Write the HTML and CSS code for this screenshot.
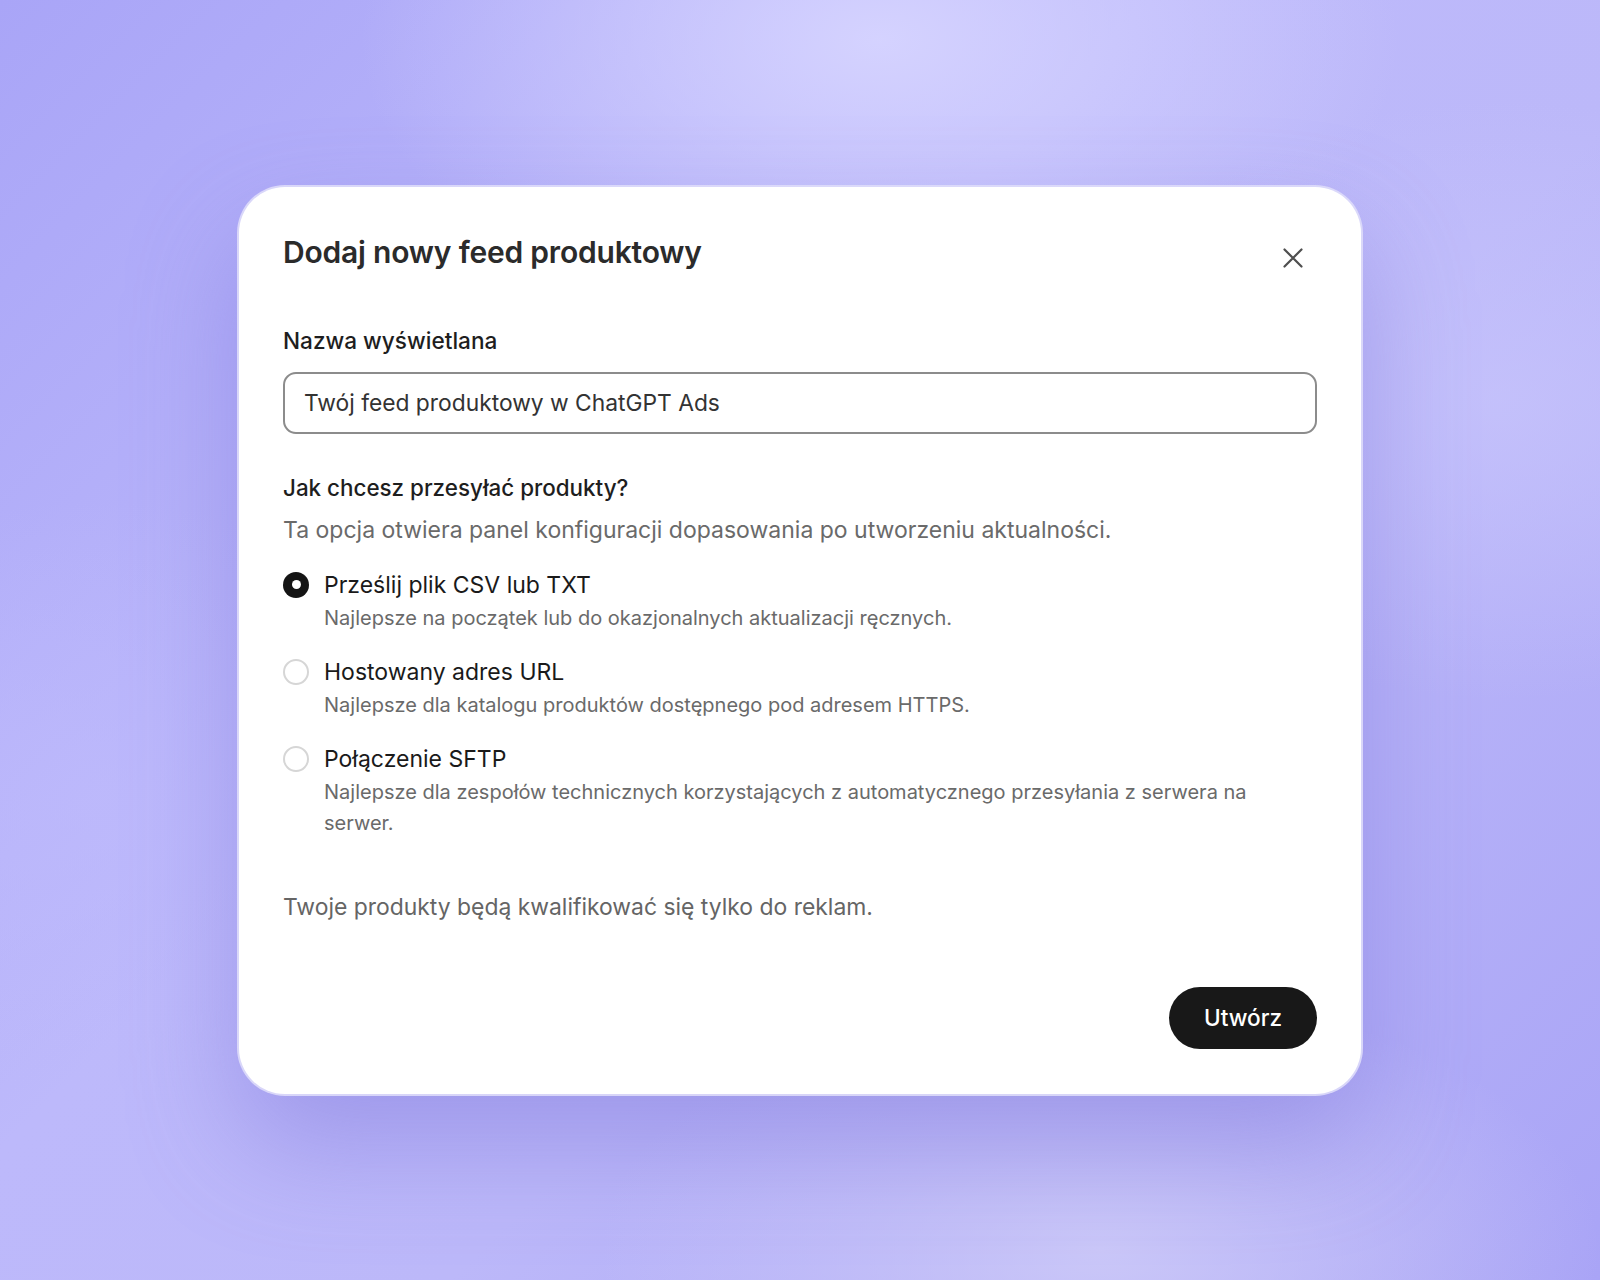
FILE: index.html
```html
<!DOCTYPE html>
<html lang="pl">
<head>
<meta charset="utf-8">
<title>Dodaj nowy feed produktowy</title>
<link rel="stylesheet" href="styles.css">
</head>
<body>
<div class="stage">
  <div class="modal">
    <div class="modal-header">
      <h1 class="modal-title">Dodaj nowy feed produktowy</h1>
      <button class="close-btn" aria-label="Zamknij">
        <svg width="24" height="24" viewBox="0 0 24 24"><path d="M3.5 3.5 L20.5 20.5 M20.5 3.5 L3.5 20.5" stroke="#4f4f4f" stroke-width="2.2" stroke-linecap="round" fill="none"/></svg>
      </button>
    </div>

    <label class="field-label">Nazwa wyświetlana</label>
    <div class="text-input">Twój feed produktowy w ChatGPT Ads</div>

    <div class="section-title">Jak chcesz przesyłać produkty?</div>
    <div class="section-sub">Ta opcja otwiera panel konfiguracji dopasowania po utworzeniu aktualności.</div>

    <div class="options">
      <div class="option">
        <span class="radio checked"></span>
        <div class="option-body">
          <div class="option-title">Prześlij plik CSV lub TXT</div>
          <div class="option-desc">Najlepsze na początek lub do okazjonalnych aktualizacji ręcznych.</div>
        </div>
      </div>
      <div class="option">
        <span class="radio"></span>
        <div class="option-body">
          <div class="option-title">Hostowany adres URL</div>
          <div class="option-desc">Najlepsze dla katalogu produktów dostępnego pod adresem HTTPS.</div>
        </div>
      </div>
      <div class="option">
        <span class="radio"></span>
        <div class="option-body">
          <div class="option-title">Połączenie SFTP</div>
          <div class="option-desc narrow">Najlepsze dla zespołów technicznych korzystających z automatycznego przesyłania z serwera na serwer.</div>
        </div>
      </div>
    </div>

    <div class="note">Twoje produkty będą kwalifikować się tylko do reklam.</div>

    <div class="actions">
      <button class="primary-btn">Utwórz</button>
    </div>
  </div>
</div>
</body>
</html>
```

FILE: styles.css
```css
* { box-sizing: border-box; }
html, body { margin: 0; padding: 0; }
body {
  width: 1600px;
  height: 1280px;
  overflow: hidden;
  font-family: Inter, "Noto Sans", "Liberation Sans", sans-serif;
  background:
    radial-gradient(ellipse 520px 300px at 880px 40px, rgba(214,212,255,0.95), rgba(214,212,255,0) 100%),
    radial-gradient(ellipse 500px 260px at 1100px 1250px, rgba(205,202,248,0.9), rgba(205,202,248,0) 100%),
    radial-gradient(ellipse 420px 300px at 1500px 400px, rgba(200,197,252,0.7), rgba(200,197,252,0) 100%),
    radial-gradient(ellipse 400px 300px at 100px 800px, rgba(190,186,252,0.7), rgba(190,186,252,0) 100%),
    linear-gradient(135deg, #a9a5f7 0%, #bdb9fb 40%, #bcb8f9 60%, #a9a4f6 100%);
}
.stage {
  width: 1600px;
  height: 1280px;
  display: flex;
  align-items: center;
  justify-content: center;
}
.modal {
  width: 1122px;
  background: #ffffff;
  border-radius: 46px;
  padding: 45px 44px 45px 44px;
  box-shadow:
    0 0 0 2px rgba(222, 220, 250, 0.9),
    0 50px 110px rgba(120, 110, 215, 0.45);
  display: flex;
  flex-direction: column;
  color: #1c1c1c;
}
.modal-header {
  display: flex;
  justify-content: space-between;
  align-items: flex-start;
}
.modal-title {
  margin: 0;
  font-size: 30px;
  line-height: 40px;
  font-weight: 600;
  color: #2b2b2b;
  letter-spacing: -0.2px;
}
.close-btn {
  margin-top: 14px;
  margin-right: 12px;
  width: 24px;
  height: 24px;
  padding: 0;
  border: 0;
  background: none;
  display: flex;
}
.field-label {
  margin-top: 53px;
  font-size: 22.6px;
  line-height: 32px;
  font-weight: 500;
  color: #1e1e1e;
}
.text-input {
  margin-top: 15px;
  height: 62px;
  border: 2px solid #8c8c8c;
  border-radius: 13px;
  padding: 0 19px;
  display: flex;
  align-items: center;
  font-size: 22.8px;
  color: #333;
}
.section-title {
  margin-top: 38px;
  font-size: 22.4px;
  line-height: 32px;
  font-weight: 500;
  color: #1e1e1e;
}
.section-sub {
  margin-top: 10px;
  font-size: 23px;
  line-height: 32px;
  color: #6a6a6a;
}
.options {
  margin-top: 23px;
  display: flex;
  flex-direction: column;
  gap: 22px;
}
.option {
  display: flex;
  align-items: flex-start;
  gap: 15px;
}
.radio {
  flex: none;
  width: 26px;
  height: 26px;
  margin-top: 3px;
  border-radius: 50%;
  border: 2px solid #d6d6d6;
  background: #fff;
  position: relative;
}
.radio.checked {
  border: 0;
  background: #141414;
}
.radio.checked::after {
  content: "";
  position: absolute;
  left: 50%;
  top: 50%;
  width: 9px;
  height: 9px;
  margin: -4.5px 0 0 -4.5px;
  background: #fff;
  border-radius: 50%;
}
.option-title {
  font-size: 23px;
  line-height: 32px;
  color: #1a1a1a;
}
.option-desc {
  margin-top: 2px;
  font-size: 20px;
  line-height: 31px;
  color: #6a6a6a;
}
.option-desc.narrow { max-width: 960px; }
.note {
  margin-top: 52px;
  font-size: 22.9px;
  line-height: 32px;
  color: #656565;
}
.actions {
  margin-top: 64px;
  display: flex;
  justify-content: flex-end;
}
.primary-btn {
  height: 62px;
  width: 148px;
  border: 0;
  border-radius: 31px;
  background: #181818;
  color: #fff;
  font-family: Inter, "Noto Sans", "Liberation Sans", sans-serif;
  font-size: 22.6px;
  font-weight: 500;
}
```
